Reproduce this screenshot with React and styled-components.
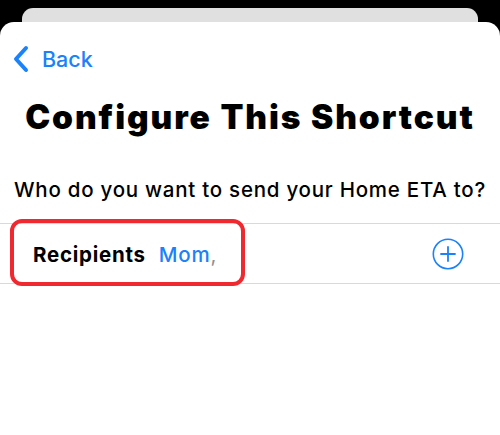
import React from "react";
import styled, { createGlobalStyle } from "styled-components";

const Global = createGlobalStyle`
  html, body { margin: 0; padding: 0; background: #000; }
  body { font-family: Inter, "Noto Sans", sans-serif; -webkit-font-smoothing: antialiased; }
`;

const Screen = styled.div`
  width: 500px;
  height: 435px;
  background: #000;
  display: flex;
  flex-direction: column;
  overflow: hidden;
`;

const BackCard = styled.div`
  margin: 8px 22px 0;
  height: 40px;
  background: #e0e0e0;
  border-radius: 11px 11px 0 0;
  flex-shrink: 0;
`;

const Sheet = styled.div`
  margin-top: -26px;
  flex: 1;
  background: #fff;
  border-radius: 14px 14px 0 0;
  display: flex;
  flex-direction: column;
`;

const NavBar = styled.button`
  all: unset;
  display: flex;
  align-items: center;
  gap: 13px;
  padding: 23px 0 0 12px;
  color: #1a82fb;
  font-size: 21.5px;
  font-weight: 500;
  cursor: pointer;
`;

const Title = styled.h1`
  margin: 24px 0 0;
  text-align: center;
  font-size: 33.5px;
  font-weight: 900;
  letter-spacing: 1.9px;
  color: #000;
  line-height: 40px;
`;

const Question = styled.p`
  margin: 41px 0 0;
  text-align: center;
  font-size: 20.5px;
  font-weight: 500;
  letter-spacing: 0.75px;
  color: #000;
  line-height: 24px;
`;

const Row = styled.div`
  margin-top: 21px;
  height: 59px;
  border-top: 1px solid #d9d9d9;
  border-bottom: 1px solid #d9d9d9;
  display: flex;
  align-items: center;
  justify-content: space-between;
  position: relative;
  padding: 0 36px 0 33px;
`;

const Highlight = styled.div`
  position: absolute;
  left: 10px;
  top: -5px;
  width: 227px;
  height: 59px;
  border: 4px solid #f0282f;
  border-radius: 12px;
  pointer-events: none;
`;

const Field = styled.div`
  display: flex;
  align-items: baseline;
  gap: 13px;
  font-size: 20.5px;
  margin-top: 2px;
  letter-spacing: 0.75px;
`;

const Label = styled.span`
  font-weight: 700;
  color: #000;
`;

const Token = styled.span`
  color: #1a82fb;
  font-weight: 500;
`;

const Comma = styled.span`
  color: #8e8e93;
`;

const AddButton = styled.button`
  all: unset;
  display: flex;
  cursor: pointer;
`;

export default function App() {
  return (
    <>
      <Global />
      <Screen>
        <BackCard />
        <Sheet>
          <NavBar>
            <svg width="17" height="28" viewBox="0 0 17 28">
              <path d="M14 3 L4 14 L14 25" fill="none" stroke="#1a82fb" strokeWidth="4" strokeLinecap="round" strokeLinejoin="round" />
            </svg>
            Back
          </NavBar>
          <Title>Configure This Shortcut</Title>
          <Question>Who do you want to send your Home ETA to?</Question>
          <Row>
            <Highlight />
            <Field>
              <Label>Recipients</Label>
              <span>
                <Token>Mom</Token>
                <Comma>,</Comma>
              </span>
            </Field>
            <AddButton aria-label="Add">
              <svg width="32" height="32" viewBox="0 0 32 32">
                <circle cx="16" cy="16" r="14.7" fill="none" stroke="#1a82fb" strokeWidth="1.6" />
                <path d="M16 9 V23 M9 16 H23" stroke="#1a82fb" strokeWidth="1.8" strokeLinecap="round" />
              </svg>
            </AddButton>
          </Row>
        </Sheet>
      </Screen>
    </>
  );
}
